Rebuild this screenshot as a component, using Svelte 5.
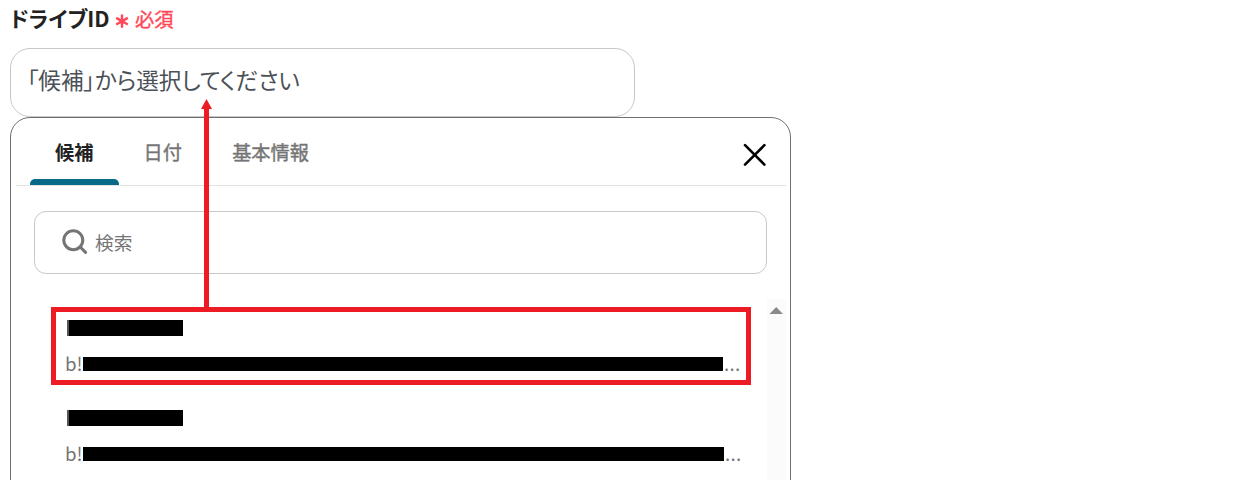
<script>
	let value = $state("");
	let keyword = $state("");
	let activeTab = $state(0);

	const tabs = ["候補", "日付", "基本情報"];

	// names and ids are masked, only the width of the mask differs
	const drives = [
	  { id: 1, maskWidth: 640 },
	  { id: 2, maskWidth: 641 },
	];
</script>

<main>
	<div class="label">
	  <span class="name">ドライブID</span>
	  <svg class="asterisk" width="14" height="16" viewBox="0 0 14 16">
		<path d="M7 1.6V14.8M1.2 4.9L12.8 11.5M12.8 4.9L1.2 11.5" />
	  </svg>
	  <span class="required">必須</span>
	</div>

	<input class="field" type="text" bind:value placeholder="「候補」から選択してください" />

	<section class="panel">
	  <div class="tabs">
		{#each tabs as tab, index}
		  <button class="tab {activeTab === index ? 'active' : ''}" onclick={() => (activeTab = index)}>{tab}</button>
		{/each}
		<button class="close" aria-label="閉じる">
		  <svg width="24" height="24" viewBox="0 0 24 24">
			<path d="M2 2.2L21.4 21.6M21.4 2.2L2 21.6" />
		  </svg>
		</button>
	  </div>

	  <div class="search-box">
		<svg width="28" height="28" viewBox="0 0 28 28">
		  <circle cx="12.3" cy="11.2" r="9.5" />
		  <path d="M19.2 18L24.6 23.4" />
		</svg>
		<input type="text" bind:value={keyword} placeholder="検索" />
	  </div>

	  <div class="results">
		<ul>
		  {#each drives as drive, index}
			<li class={index === 0 ? "selected" : ""}>
			  <div class="title"></div>
			  <div class="drive-id">
				<span class="prefix">b!</span>
				<span class="mask" style="width: {drive.maskWidth}px"></span>
				<span class="dots">...</span>
			  </div>
			</li>
		  {/each}
		</ul>
		<div class="scrollbar">
		  <svg width="14" height="7" viewBox="0 0 14 7"><path d="M0.5 7L7.2 0L14 7Z" /></svg>
		</div>
	  </div>
	</section>

	<!-- arrow from the selected drive up to the field -->
	<svg class="arrow" width="12" height="209" viewBox="0 0 12 209">
	  <path d="M6.5 0L12 10H9V209H4V10H1Z" />
	</svg>
</main>

<style>
	:global(body) {
	  margin: 0;
	  background: #fff;
	}

	main {
	  position: relative;
	  box-sizing: border-box;
	  height: 480px;
	  padding-left: 10px;
	  overflow: hidden;
	  font-family: "Noto Sans CJK JP", sans-serif;
	}

	input,
	button {
	  box-sizing: border-box;
	  border: 0;
	  padding: 0;
	  background: none;
	  font-family: inherit;
	  outline: none;
	}

	.label {
	  display: flex;
	  height: 48px;
	  line-height: 38px;
	  white-space: nowrap;
	}

	.name {
	  width: 105px;
	  font-size: 21.4px;
	  font-weight: 700;
	  line-height: 36px;
	  color: #222;
	  font-feature-settings: "palt";
	}

	.asterisk {
	  margin-top: 13px;
	  margin-right: 6px;
	  fill: none;
	  stroke: #ff4757;
	  stroke-width: 2.4;
	}

	.required {
	  font-size: 19.2px;
	  color: #ff4757;
	  -webkit-text-stroke: 0.4px #ff4757;
	}

	.field {
	  display: block;
	  width: 625px;
	  height: 69px;
	  padding: 0 16px 6px;
	  border: 1px solid #c8c8c8;
	  border-radius: 20px;
	  font-size: 22.6px;
	  font-feature-settings: "palt";
	}

	.field::placeholder {
	  color: #4b5156;
	  opacity: 1;
	}

	.panel {
	  box-sizing: border-box;
	  width: 781px;
	  height: 400px;
	  padding: 0 4px 0 5px;
	  border: 1px solid #707070;
	  border-radius: 20px;
	}

	.tabs {
	  display: flex;
	  box-sizing: border-box;
	  height: 68px;
	  padding: 0 19px 0 14px;
	  border-bottom: 1px solid #e2e2e2;
	}

	.tab {
	  position: relative;
	  padding: 2px 25.2px 0 25px;
	  font-size: 19.2px;
	  line-height: 65px;
	  color: #757575;
	  -webkit-text-stroke: 0.4px #757575;
	  cursor: pointer;
	}

	.tab.active {
	  font-weight: 700;
	  color: #222;
	  -webkit-text-stroke: 0;
	}

	.tab.active::after {
	  content: "";
	  position: absolute;
	  left: 0;
	  right: 0;
	  bottom: 0;
	  height: 6px;
	  border-radius: 5px 5px 0 0;
	  background: #086a87;
	}

	.close {
	  width: 24px;
	  height: 24px;
	  margin: 25px 0 0 auto;
	  cursor: pointer;
	}

	.close svg {
	  display: block;
	  stroke: #000;
	  stroke-width: 2.6;
	  stroke-linecap: round;
	}

	.search-box {
	  display: flex;
	  align-items: center;
	  box-sizing: border-box;
	  width: 733px;
	  height: 63px;
	  margin: 25px 0 25px 18px;
	  padding-left: 26px;
	  border: 1px solid #c8c8c8;
	  border-radius: 12px;
	}

	.search-box svg {
	  margin-right: 6px;
	  fill: none;
	  stroke: #757575;
	  stroke-width: 3;
	  stroke-linecap: round;
	}

	.search-box input {
	  padding-bottom: 2px;
	  font-size: 18.7px;
	}

	.search-box input::placeholder {
	  color: #757575;
	  opacity: 1;
	}

	.results {
	  display: flex;
	  justify-content: space-between;
	  height: 200px;
	}

	ul {
	  margin: 8px 0 0 35px;
	  padding: 0;
	  list-style: none;
	}

	li {
	  box-sizing: border-box;
	  width: 700px;
	  height: 78px;
	  margin-bottom: 12px;
	  padding: 8px 0 0 9px;
	  border: 5px solid transparent;
	}

	li.selected {
	  border-color: #ed1c24;
	}

	.title {
	  width: 114px;
	  height: 16px;
	  margin-left: 2px;
	  border-left: 2px solid #555;
	  background: #000;
	}

	.drive-id {
	  display: flex;
	  height: 14px;
	  margin-top: 21px;
	  font-size: 18.7px;
	  line-height: 12px;
	  color: #757575;
	}

	.prefix {
	  width: 18px;
	}

	.mask {
	  background: #000;
	}

	.dots {
	  margin-left: 1px;
	  letter-spacing: 0.3px;
	}

	.scrollbar {
	  width: 19px;
	  background: #fbfbfb;
	}

	.scrollbar svg {
	  display: block;
	  margin: 8px 0 0 2px;
	  fill: #8a8a8a;
	}

	.arrow {
	  position: absolute;
	  left: 200px;
	  top: 99px;
	  fill: #ed1c24;
	}
</style>
